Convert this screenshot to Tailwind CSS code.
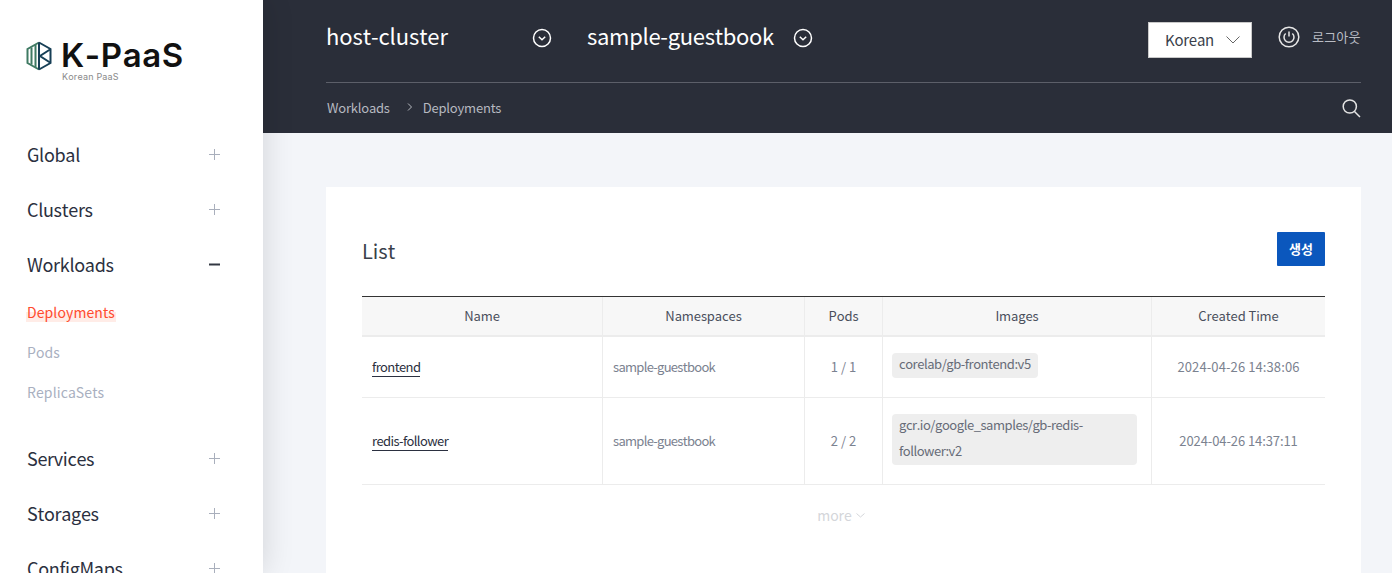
<!DOCTYPE html>
<html lang="en">
<head>
  <meta charset="UTF-8" />
  <title>K-PaaS</title>
  <script src="https://cdn.jsdelivr.net/npm/@tailwindcss/browser@4"></script>
</head>
<body class="h-[573px] overflow-hidden bg-[#f3f5f9] font-['Noto_Sans_CJK_KR','Noto_Sans',sans-serif] [font-kerning:none]">
<div class="flex h-[573px]">
  <!-- Sidebar -->
  <aside class="w-[263px] shrink-0 bg-white h-[573px] overflow-hidden shadow-[0_0_30px_rgba(0,0,0,0.14)] z-10 pl-[27px] pr-[43px]">
    <div class="flex items-start h-[127px] pt-[41px]">
      <svg class="w-[26px] h-[30px] -ml-[1px] shrink-0" viewBox="0 0 26 30" fill="none" stroke-width="2">
        <path d="M13 1.500 1.500 8v14L13 28.500" stroke="#3f7a63"/>
        <path d="M13 1.500 24.500 8v14L13 28.500" stroke="#173f56"/>
        <path d="M5.500 6.500v17M9.500 4v22" stroke="#3f7a63"/>
        <path d="M13 1.500v27M24 8.500 14 15l10 6.500" stroke="#173f56"/>
      </svg>
      <div class="ml-[9px] -mt-[3px]">
        <div class="font-['Inter',sans-serif] font-semibold text-[33px] leading-[34px] tracking-[0.6px] text-[#111]">K-PaaS</div>
        <div class="font-['Inter',sans-serif] text-[9px] leading-[9px] tracking-[0.2px] text-[#8a8a8a] ml-[1px]">Korean PaaS</div>
      </div>
    </div>
    <nav class="text-[#2b3040]">
      <div class="flex justify-between items-center h-[55px] text-[18px] tracking-[-0.3px]"><span>Global</span>
        <svg class="w-[11px] h-[11px]" viewBox="0 0 11 11" stroke="#a9afbc"><path d="M5.500 0v11M0 5.500h11"/></svg></div>
      <div class="flex justify-between items-center h-[55px] text-[18px] tracking-[-0.3px]"><span>Clusters</span>
        <svg class="w-[11px] h-[11px]" viewBox="0 0 11 11" stroke="#a9afbc"><path d="M5.500 0v11M0 5.500h11"/></svg></div>
      <div class="flex justify-between items-center h-[55px] text-[18px] tracking-[-0.3px]"><span>Workloads</span>
        <svg class="w-[11px] h-[11px]" viewBox="0 0 11 11" stroke="#333842" stroke-width="2"><path d="M0 5.500h11"/></svg></div>
      <ul class="text-[14px] text-[#a9b0bf] tracking-[0.1px] -mt-[1px] pb-[18px]">
        <li class="h-[41px] flex items-center"><span class="text-[#ff4b2e] leading-[20px] bg-[linear-gradient(transparent_50%,#ffece7_50%)] -ml-[1px] px-[1px]">Deployments</span></li>
        <li class="h-[40px] flex items-center">Pods</li>
        <li class="h-[41px] flex items-center">ReplicaSets</li>
      </ul>
      <div class="flex justify-between items-center h-[55px] text-[18px] tracking-[-0.3px]"><span>Services</span>
        <svg class="w-[11px] h-[11px]" viewBox="0 0 11 11" stroke="#a9afbc"><path d="M5.500 0v11M0 5.500h11"/></svg></div>
      <div class="flex justify-between items-center h-[55px] text-[18px] tracking-[-0.3px]"><span>Storages</span>
        <svg class="w-[11px] h-[11px]" viewBox="0 0 11 11" stroke="#a9afbc"><path d="M5.500 0v11M0 5.500h11"/></svg></div>
      <div class="flex justify-between items-center h-[55px] text-[18px] tracking-[-0.3px]"><span>ConfigMaps</span>
        <svg class="w-[11px] h-[11px]" viewBox="0 0 11 11" stroke="#a9afbc"><path d="M5.500 0v11M0 5.500h11"/></svg></div>
    </nav>
  </aside>

  <div class="flex-1 min-w-0">
    <!-- Header -->
    <header class="h-[133px] bg-[#2a2e39] pl-[63px] pr-[31px]">
      <div class="h-[83px] border-b border-[#5c5f69] flex items-start">
        <div class="w-[261px] flex items-center h-[22px] mt-[26px]">
          <span class="w-[206px] text-[22px] leading-[22px] text-white tracking-[-0.1px] -mt-[4px]">host-cluster</span>
          <svg class="w-[20px] h-[20px] mt-[2px]" viewBox="0 0 20 20" fill="none" stroke="#fff"><circle cx="10" cy="10" r="8.500" stroke-width="1.500"/><path d="m6.800 8.800 3.200 3 3.200-3" stroke-width="1.500"/></svg>
        </div>
        <div class="flex items-center h-[22px] mt-[26px]">
          <span class="w-[206px] text-[22px] leading-[22px] text-white tracking-[-0.3px] -mt-[4px]">sample-guestbook</span>
          <svg class="w-[20px] h-[20px] mt-[2px]" viewBox="0 0 20 20" fill="none" stroke="#fff"><circle cx="10" cy="10" r="8.500" stroke-width="1.500"/><path d="m6.800 8.800 3.200 3 3.200-3" stroke-width="1.500"/></svg>
        </div>
        <div class="ml-auto flex items-start">
          <div class="mt-[22px] w-[104px] h-[36px] bg-white border border-[#c9c9c9] flex items-center pl-[16px] text-[15px] tracking-[-0.25px] text-[#3a3f4b]">
            Korean
            <svg class="w-[14px] h-[8px] ml-[12px]" viewBox="0 0 14 8" fill="none" stroke="#666"><path d="m.5.500 6.500 6.500 6.500-6.500"/></svg>
          </div>
          <svg class="w-[22px] h-[22px] mt-[26px] ml-[26px]" viewBox="0 0 22 22" fill="none" stroke="#e6e6e6" stroke-width="1.500"><circle cx="11" cy="11" r="9.800"/><path d="M7.700 7.500a5 5 0 1 0 6.600 0M11 5.500v5"/></svg>
          <span class="mt-[28px] ml-[12px] w-[49px] text-[13px] leading-[18px] text-[#b9bcc4] tracking-[0.2px] whitespace-nowrap">로그아웃</span>
        </div>
      </div>
      <div class="h-[50px] flex items-center text-[13px] text-[#b6b9c0] tracking-[-0.2px] pb-[1px]">
        <span class="ml-[1px]">Workloads</span>
        <svg class="w-[6px] h-[8px] ml-[17px] -mt-[2px]" viewBox="0 0 6 8" fill="none" stroke="#b6b9c0"><path d="m1 .500 3.500 3.500L1 7.500"/></svg>
        <span class="ml-[10px]">Deployments</span>
        <svg class="w-[20px] h-[20px] ml-auto" viewBox="0 0 20 20" fill="none" stroke="#e4e4e4" stroke-width="1.500"><circle cx="8.800" cy="8.500" r="6.600"/><path d="m13.500 13.500 5.500 5.500"/></svg>
      </div>
    </header>

    <!-- Content -->
    <main class="pt-[54px] pl-[63px] pr-[31px]">
      <section class="bg-white h-[500px] px-[36px] pt-[45px]">
        <div class="flex justify-between items-center h-[34px]">
          <h2 class="text-[20px] text-[#3a3f4b] mt-[4px]">List</h2>
          <button class="w-[48px] h-[34px] bg-[#0b57bd] rounded-[1px] text-white text-[13px] font-bold">생성</button>
        </div>
        <table class="mt-[30px] w-[963px] table-fixed border-t border-[#333] text-[13px] border-separate border-spacing-0">
          <colgroup>
            <col class="w-[241px]" /><col class="w-[202px]" /><col class="w-[78px]" /><col class="w-[269px]" /><col class="w-[173px]" />
          </colgroup>
          <thead>
            <tr class="h-[40px] bg-[#f7f7f7] text-[#4a4f5c] tracking-[-0.1px]">
              <th class="font-normal border-b-2 border-r border-[#ececec]">Name</th>
              <th class="font-normal border-b-2 border-r border-[#ececec]">Namespaces</th>
              <th class="font-normal border-b-2 border-r border-[#ececec]">Pods</th>
              <th class="font-normal border-b-2 border-r border-[#ececec]">Images</th>
              <th class="font-normal border-b-2 border-[#ececec]">Created Time</th>
            </tr>
          </thead>
          <tbody class="text-[#7b8290]">
            <tr class="h-[61px]">
              <td class="border-b border-r border-[#ececec] pl-[10px] tracking-[-0.6px]"><a class="text-[#2b3040] border-b border-[#2b3040]">frontend</a></td>
              <td class="border-b border-r border-[#ececec] pl-[10px] tracking-[-0.7px]">sample-guestbook</td>
              <td class="border-b border-r border-[#ececec] text-center">1 / 1</td>
              <td class="border-b border-r border-[#ececec] pl-[9px] align-top pt-[16px]"><span class="inline-block h-[25px] leading-[22px] px-[7px] bg-[#eeeeee] rounded-[4px] text-[#676c78] tracking-[-0.45px]">corelab/gb-frontend:v5</span></td>
              <td class="border-b border-[#ececec] text-center tracking-[0.1px]">2024-04-26 14:38:06</td>
            </tr>
            <tr class="h-[87px]">
              <td class="border-b border-r border-[#ececec] pl-[10px] tracking-[-0.6px]"><a class="text-[#2b3040] border-b border-[#2b3040]">redis-follower</a></td>
              <td class="border-b border-r border-[#ececec] pl-[10px] tracking-[-0.7px]">sample-guestbook</td>
              <td class="border-b border-r border-[#ececec] text-center">2 / 2</td>
              <td class="border-b border-r border-[#ececec] pl-[9px] align-top pt-[16px]"><div class="w-[245px] h-[51px] leading-[26px] px-[7px] bg-[#eeeeee] rounded-[4px] text-[#676c78] tracking-[-0.45px]"><div class="-translate-y-[2px]">gcr.io/google_samples/gb-redis-follower:v2</div></div></td>
              <td class="border-b border-[#ececec] text-center tracking-[-0.1px]">2024-04-26 14:37:11</td>
            </tr>
          </tbody>
        </table>
        <div class="flex justify-center items-center h-[61px] text-[14px] text-[#d4d6da] pr-[5px]">
          more
          <svg class="w-[9px] h-[5px] ml-[4px]" viewBox="0 0 9 5" fill="none" stroke="#d4d6da"><path d="m.500.500 4 3.500 4-3.500"/></svg>
        </div>
      </section>
    </main>
  </div>
</div>
</body>
</html>
